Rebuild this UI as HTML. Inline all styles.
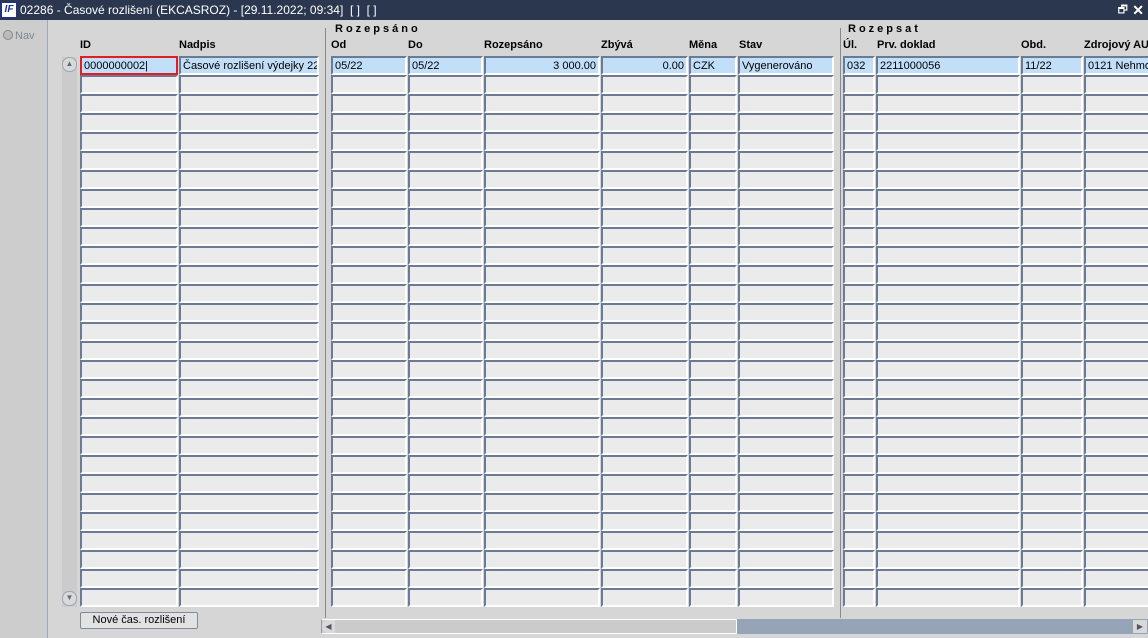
<!DOCTYPE html>
<html><head><meta charset="utf-8">
<style>
*{margin:0;padding:0;box-sizing:border-box}
body{width:1148px;height:638px;overflow:hidden;background:#d6d6d6;font-family:"Liberation Sans",Arial,sans-serif;font-size:11px;color:#000;position:relative}
.title{position:absolute;left:0;top:0;width:1148px;height:20px;background:#2a374e;color:#fff;font-size:12px;line-height:20px}
.logo{position:absolute;left:1px;top:2px;width:16px;height:16px;background:#fff;border:1px solid #1b2fa0;color:#1b2fa0;font-weight:bold;font-style:italic;font-size:10px;line-height:14px;text-align:center}
.ttext{position:absolute;left:20px;top:0}
.left{position:absolute;left:0;top:20px;width:48px;height:618px;background:#cdcdcd;border-right:1px solid #9eaabb}
.nav{position:absolute;left:3px;top:10px;color:#7d8796;font-size:11px}
.nav i{display:inline-block;width:10px;height:10px;border-radius:50%;background:#bbb;border:1px solid #888;vertical-align:-1px;margin-right:2px}
.hdr{position:absolute;top:39px;font-weight:bold;font-size:11px;white-space:nowrap}
.grp{position:absolute;top:23px;font-weight:bold;font-size:11px;letter-spacing:3px}
.vl{position:absolute;top:28px;width:1px;height:590px;background:#8a8a8a}
.c{position:absolute;height:19px;background:#ebebeb;border-top:2px solid #6b7b95;border-left:2px solid #6b7b95;border-bottom:2px solid #fff;border-right:2px solid #fff;line-height:16px;padding-left:2px;white-space:nowrap;overflow:hidden}
.h{background:#c2dff9}
.vs{position:absolute;left:62px;top:57px;width:15px;height:550px;background:#cbcbcb}
.vb{position:absolute;left:62px;width:15px;height:15px;background:#d9d9d9;border:1px solid #9aa6b8;border-radius:7px}
.btn{position:absolute;left:80px;top:612px;width:118px;height:17px;border:1px solid #7d8aa0;border-radius:2px;background:#e2e2e2;text-align:center;line-height:15px;font-size:11px}
.hs{position:absolute;left:321px;top:619px;width:827px;height:15px;background:#95a4b7}
.th{position:absolute;left:321px;top:619px;width:416px;height:15px;background:#cbcbcb;border:1px solid #fff;border-left:1px solid #8e9bb0}
</style></head><body>
<div class="title"><div class="logo">IF</div><div class="ttext">02286 - Časové rozlišení (EKCASROZ) - [29.11.2022; 09:34]&nbsp; [ ]&nbsp; [ ]</div>
<div style="position:absolute;right:20px;top:0;font-size:11px">&#x1F5D7;</div><div style="position:absolute;right:4px;top:0;font-size:14px;font-weight:bold">✕</div></div>
<div class="left"><div class="nav"><i></i>Nav</div></div>
<div class="grp" style="left:335px">Rozepsáno</div>
<div class="grp" style="left:848px">Rozepsat</div>
<div class="vl" style="left:325px"></div>
<div class="vl" style="left:840px"></div>
<div class="hdr" style="left:80px">ID</div>
<div class="hdr" style="left:179px">Nadpis</div>
<div class="hdr" style="left:331px">Od</div>
<div class="hdr" style="left:408px">Do</div>
<div class="hdr" style="left:484px">Rozepsáno</div>
<div class="hdr" style="left:601px">Zbývá</div>
<div class="hdr" style="left:689px">Měna</div>
<div class="hdr" style="left:739px">Stav</div>
<div class="hdr" style="left:843px">Úl.</div>
<div class="hdr" style="left:877px">Prv. doklad</div>
<div class="hdr" style="left:1021px">Obd.</div>
<div class="hdr" style="left:1084px">Zdrojový AU</div>
<div class="vs"></div>
<div class="vb" style="top:57px;font-size:8px;text-align:center;line-height:12px;color:#667">▲</div>
<div class="vb" style="top:591px;font-size:8px;text-align:center;line-height:12px;color:#667">▼</div>
<div id="g"></div>
<div class="c h" style="left:80px;top:56px;width:98px;border:2px solid #e02020;background:#c2dff9">0000000002|</div>
<div class="c h" style="left:179px;top:56px;width:140px">Časové rozlišení výdejky 22</div>
<div class="c h" style="left:331px;top:56px;width:76px">05/22</div>
<div class="c h" style="left:408px;top:56px;width:75px">05/22</div>
<div class="c h" style="left:484px;top:56px;width:116px;text-align:right;padding-right:2px">3 000.00</div>
<div class="c h" style="left:601px;top:56px;width:87px;text-align:right;padding-right:2px">0.00</div>
<div class="c h" style="left:689px;top:56px;width:48px">CZK</div>
<div class="c h" style="left:738px;top:56px;width:96px">Vygenerováno</div>
<div class="c h" style="left:843px;top:56px;width:32px">032</div>
<div class="c h" style="left:876px;top:56px;width:144px">2211000056</div>
<div class="c h" style="left:1021px;top:56px;width:62px">11/22</div>
<div class="c h" style="left:1084px;top:56px;width:70px">0121 Nehmo</div>
<div class="btn">Nové čas. rozlišení</div>
<div class="hs"></div><div class="th"></div>
<div style="position:absolute;left:322px;top:620px;width:13px;height:13px;background:#d9d9d9;border-radius:6px 0 0 6px;font-size:8px;line-height:13px;color:#556;text-align:center">◀</div>
<div style="position:absolute;left:1133px;top:620px;width:14px;height:13px;background:#d9d9d9;font-size:8px;line-height:13px;color:#556;text-align:center">▶</div>
<script>
var cols=[[80,98],[179,140],[331,76],[408,75],[484,116],[601,87],[689,48],[738,96],[843,32],[876,144],[1021,62],[1084,70]];
var h='';for(var r=1;r<29;r++){var t=56+r*19;for(var i=0;i<cols.length;i++){h+='<div class="c" style="left:'+cols[i][0]+'px;top:'+t+'px;width:'+cols[i][1]+'px"></div>';}}
document.getElementById('g').innerHTML=h;
</script>
</body></html>
